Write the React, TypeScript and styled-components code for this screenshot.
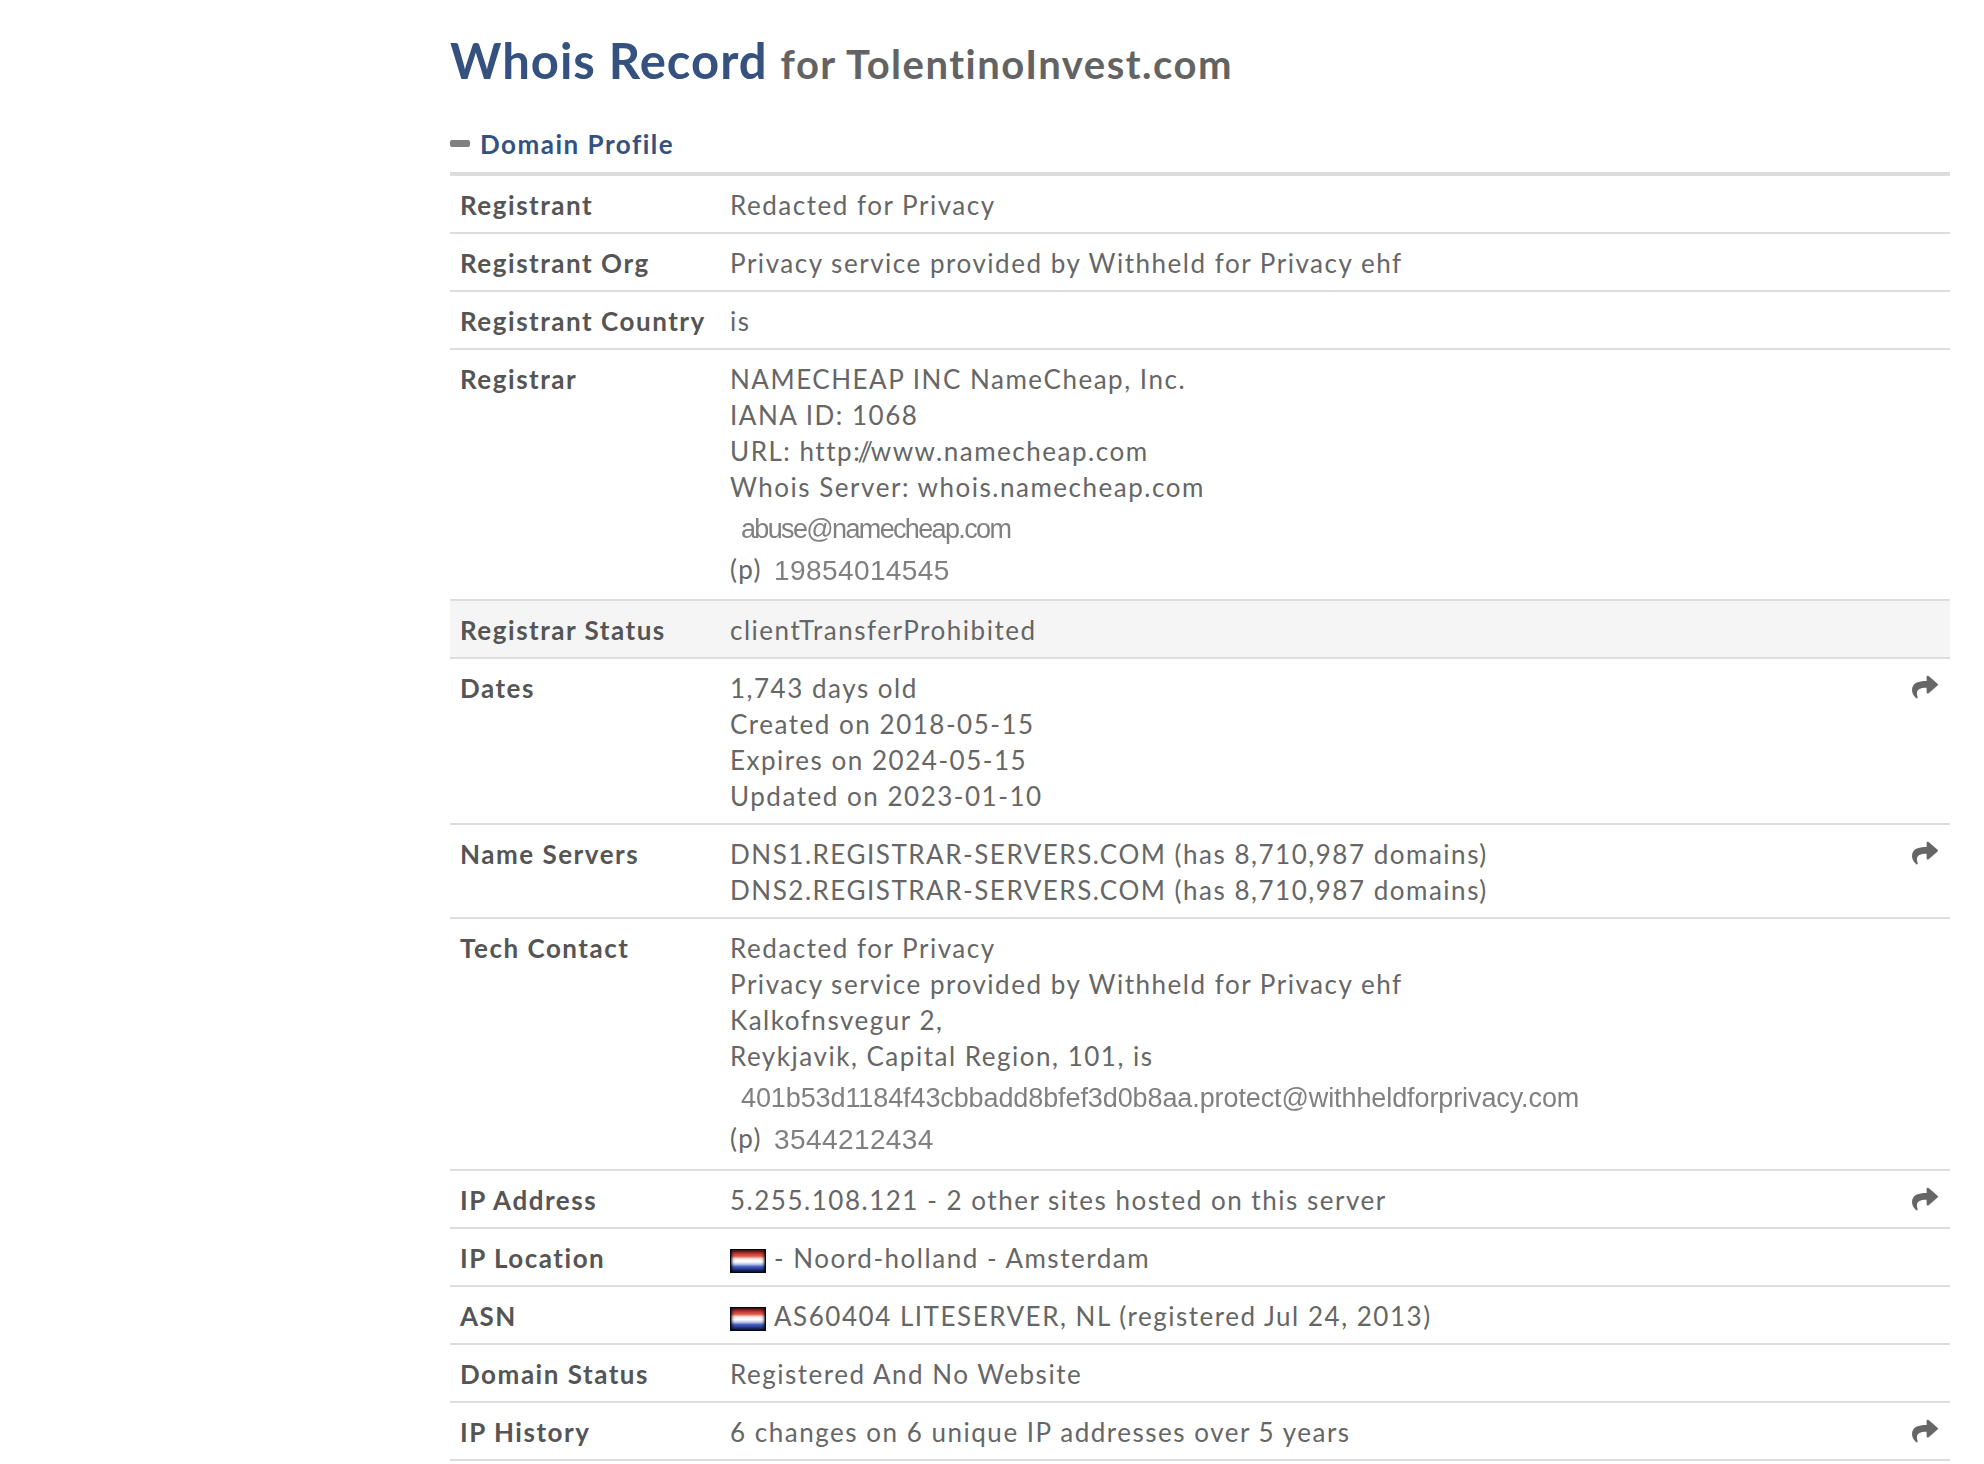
import React from "react";
import styled, { createGlobalStyle } from "styled-components";
import { FaShare } from "react-icons/fa";

const Global = createGlobalStyle`
  html, body { margin: 0; padding: 0; background: #fff; }
  body { font-family: Lato, "Open Sans", sans-serif; color: #555; overflow: hidden; }
`;

const Page = styled.main`
  width: 1500px;
  margin-left: 450px;
  padding-top: 29px;
  box-sizing: border-box;
`;

const Title = styled.h1`
  margin: 0;
  height: 62px;
  display: flex;
  align-items: baseline;
  gap: 13px;
  font-size: 49px;
  line-height: 62px;
  font-weight: 700;
  letter-spacing: 1px;
  color: #35517f;
`;

const TitleFor = styled.span`
  font-size: 40px;
  color: #636363;
  letter-spacing: 1.5px;
`;

const SectionHead = styled.div`
  margin-top: 24px;
  height: 57px;
  display: flex;
  align-items: center;
  gap: 10px;
  border-bottom: 4px solid #ddd;
  font-size: 26px;
  font-weight: 700;
  letter-spacing: 1.5px;
  color: #35517f;
`;

const Dash = styled.span`
  width: 20px;
  height: 7px;
  border-radius: 2px;
  background: #7f7f7f;
`;

const Row = styled.div<{ $shaded?: boolean }>`
  display: grid;
  grid-template-columns: 280px 1fr 40px;
  padding: 11px 0 9px;
  border-bottom: 2px solid #ddd;
  background: ${(p) => (p.$shaded ? "#f5f5f5" : "transparent")};
  font-size: 26px;
  line-height: 36px;
  letter-spacing: 1.52px;
`;

const Label = styled.div`
  padding-left: 10px;
  font-weight: 700;
  color: #555;
  white-space: nowrap;
`;

const Value = styled.div`
  color: #666;
  font-weight: 400;
`;

const Line = styled.div``;

const Slashes = styled.span`
  letter-spacing: -2.2px;
`;

const ImgText = styled.span<{ $phone?: boolean; $spacing: string }>`
  font-family: "Liberation Sans", Arial, sans-serif;
  color: #808080;
  font-size: ${(p) => (p.$phone ? "28px" : "27px")};
  letter-spacing: ${(p) => p.$spacing};
  margin-top: ${(p) => (p.$phone ? "2px" : "0")};
  filter: blur(0.6px);
  display: inline-block;
`;

const EmailLine = styled.div`
  padding-left: 11px;
  height: 43px;
  line-height: 46px;
`;

const PhoneLine = styled.div<{ $tall?: boolean }>`
  height: ${(p) => (p.$tall ? "43px" : "42px")};
  line-height: 42px;
  display: flex;
  gap: 12px;
  align-items: flex-start;
`;

const FlagWrap = styled.span`
  display: inline-block;
  width: 36px;
  height: 24px;
  margin-right: 8px;
  vertical-align: -5px;
  background: linear-gradient(180deg, #a82a26 0 10%, #e05a48 28%, #f7e6e4 40%, #ffffff 52%, #c2caea 64%, #3f5ac0 76%, #22337f 92%);
  border: 1px solid #060610;
  box-shadow: inset 0 0 3px 1px rgba(0, 0, 10, 0.9);
  filter: blur(0.3px);
  box-sizing: border-box;
`;

const ShareCell = styled.div`
  display: flex;
  justify-content: flex-end;
  padding: 4px 12px 0 0;
  color: #666;
  font-size: 26px;
`;

type R = { label: string; lines?: React.ReactNode[]; extra?: React.ReactNode; share?: boolean; shaded?: boolean };

const Contact = ({ email, phone, spacing, tall }: { email: string; phone: string; spacing: string; tall?: boolean }) => (
  <>
    <EmailLine>
      <ImgText $spacing={spacing}>{email}</ImgText>
    </EmailLine>
    <PhoneLine $tall={tall}>
      <span>(p)</span>
      <ImgText $phone $spacing="0.4px">{phone}</ImgText>
    </PhoneLine>
  </>
);

const rows: R[] = [
  { label: "Registrant", lines: ["Redacted for Privacy"] },
  { label: "Registrant Org", lines: ["Privacy service provided by Withheld for Privacy ehf"] },
  { label: "Registrant Country", lines: ["is"] },
  {
    label: "Registrar",
    lines: [
      "NAMECHEAP INC NameCheap, Inc.",
      "IANA ID: 1068",
      <>URL: http<Slashes>://</Slashes>www.namecheap.com</>,
      "Whois Server: whois.namecheap.com",
    ],
    extra: <Contact email="abuse@namecheap.com" phone="19854014545" spacing="-1.65px" />,
  },
  { label: "Registrar Status", lines: ["clientTransferProhibited"], shaded: true },
  { label: "Dates", lines: ["1,743 days old", "Created on 2018-05-15", "Expires on 2024-05-15", "Updated on 2023-01-10"], share: true },
  {
    label: "Name Servers",
    lines: ["DNS1.REGISTRAR-SERVERS.COM (has 8,710,987 domains)", "DNS2.REGISTRAR-SERVERS.COM (has 8,710,987 domains)"],
    share: true,
  },
  {
    label: "Tech Contact",
    lines: ["Redacted for Privacy", "Privacy service provided by Withheld for Privacy ehf", "Kalkofnsvegur 2,", "Reykjavik, Capital Region, 101, is"],
    extra: <Contact email="401b53d1184f43cbbadd8bfef3d0b8aa.protect@withheldforprivacy.com" phone="3544212434" spacing="-0.1px" tall />,
  },
  { label: "IP Address", lines: ["5.255.108.121 - 2 other sites hosted on this server"], share: true },
  { label: "IP Location", lines: [<><FlagWrap />- Noord-holland - Amsterdam</>] },
  { label: "ASN", lines: [<><FlagWrap />AS60404 LITESERVER, NL (registered Jul 24, 2013)</>] },
  { label: "Domain Status", lines: ["Registered And No Website"] },
  { label: "IP History", lines: ["6 changes on 6 unique IP addresses over 5 years"], share: true },
];

export default function App() {
  return (
    <Page>
      <Global />
      <Title>
        Whois Record <TitleFor>for TolentinoInvest.com</TitleFor>
      </Title>
      <SectionHead>
        <Dash />
        Domain Profile
      </SectionHead>
      {rows.map((r) => (
        <Row key={r.label} $shaded={r.shaded}>
          <Label>{r.label}</Label>
          <Value>
            {r.lines?.map((l, i) => <Line key={i}>{l}</Line>)}
            {r.extra}
          </Value>
          <ShareCell>{r.share && <FaShare />}</ShareCell>
        </Row>
      ))}
    </Page>
  );
}
